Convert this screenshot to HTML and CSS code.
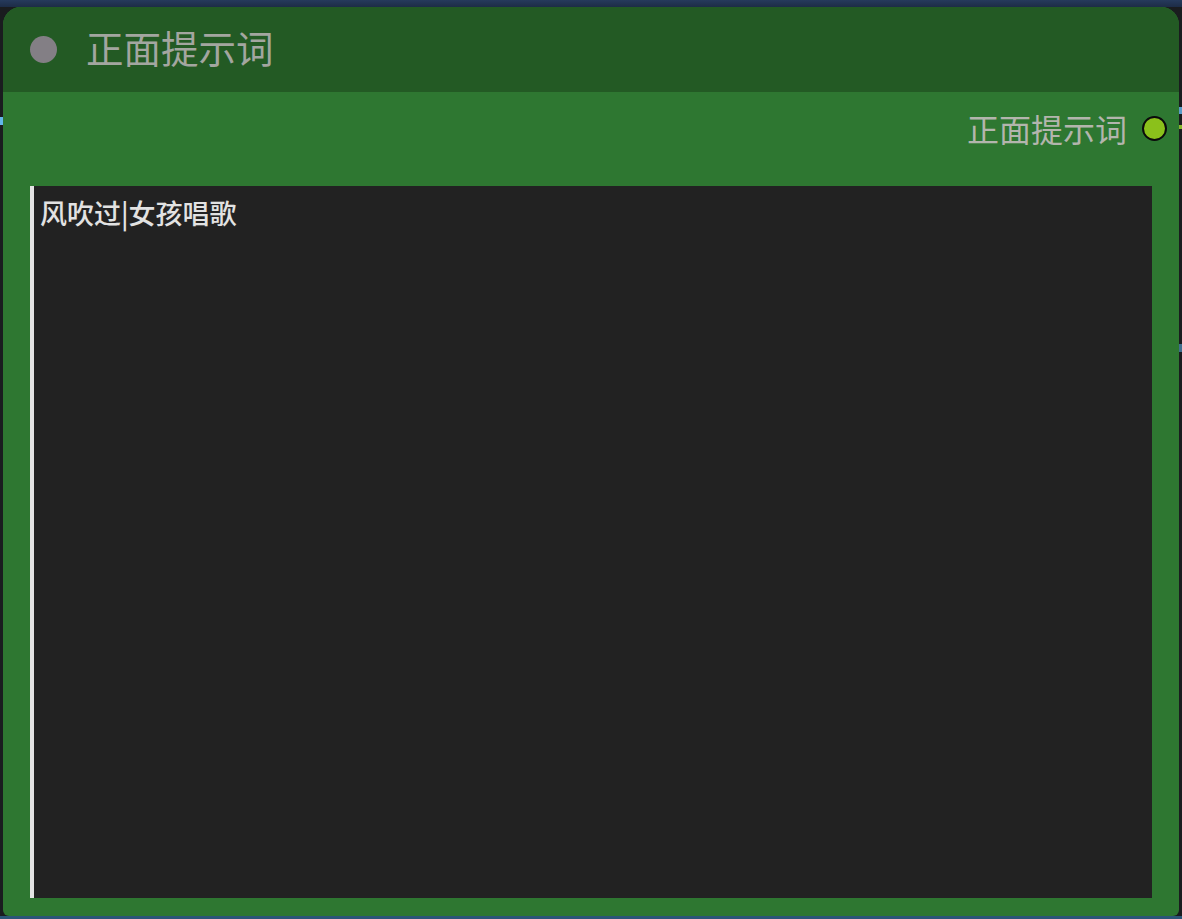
FILE: index.html
```html
<!DOCTYPE html>
<html lang="zh-CN">
<head>
<meta charset="utf-8">
<title>正面提示词</title>
<link rel="stylesheet" href="styles.css">
</head>
<body>
<div class="canvas">
  <div class="canvas-top"></div>
  <span class="link link-left"></span>
  <span class="link link-right-blue"></span>
  <span class="link link-right-green"></span>
  <span class="link link-right-mid"></span>
  <div class="node">
    <div class="node-header">
      <span class="status-dot"></span>
      <span class="node-title">正面提示词</span>
    </div>
    <div class="node-body">
      <div class="output-row">
        <span class="output-label">正面提示词</span>
        <span class="output-dot"></span>
      </div>
      <textarea class="prompt" spellcheck="false">风吹过|女孩唱歌</textarea>
    </div>
  </div>
  <div class="canvas-bottom"></div>
</div>
</body>
</html>
```
FILE: styles.css
```css
* { box-sizing: border-box; }
html, body {
  margin: 0;
  padding: 0;
  width: 1182px;
  height: 919px;
  overflow: hidden;
  background: #1a1c1f;
  font-family: "Noto Sans CJK SC", "Noto Sans", sans-serif;
}
.canvas {
  position: relative;
  width: 1182px;
  height: 919px;
  display: flex;
  flex-direction: column;
}
.canvas-top {
  height: 7px;
  flex: none;
  background: linear-gradient(#263a5c, #1d2c46);
}
.canvas-bottom {
  height: 3px;
  flex: none;
  background: #2b5677;
}
.link {
  position: absolute;
  display: block;
}
.link-left { left: 0; top: 117px; width: 3px; height: 8px; background: #62b6ea; }
.link-right-blue { right: 0; top: 107px; width: 3px; height: 7px; background: #5a9cc8; }
.link-right-green { right: 0; top: 125px; width: 3px; height: 4px; background: #86b82a; }
.link-right-mid { right: 0; top: 344px; width: 3px; height: 8px; background: #3f6f8e; }
.node {
  margin: 0 3px;
  height: 909px;
  flex: none;
  display: flex;
  flex-direction: column;
  background: #2e7731;
  border-radius: 18px 18px 6px 6px;
  overflow: hidden;
}
.node-header {
  height: 85px;
  flex: none;
  background: #235a24;
  display: flex;
  align-items: center;
  padding-left: 27px;
  gap: 29px;
}
.status-dot {
  width: 27px;
  height: 27px;
  border-radius: 50%;
  background: #837f85;
  flex: none;
}
.node-title {
  font-size: 37.5px;
  color: #a3a6a0;
  line-height: 1;
  margin-top: -5px;
}
.node-body {
  flex: 1;
  display: flex;
  flex-direction: column;
  padding: 0 27px 18px 27px;
}
.output-row {
  height: 72px;
  display: flex;
  align-items: center;
  justify-content: flex-end;
  gap: 15px;
  margin-right: -15px;
}
.output-label {
  font-size: 32px;
  line-height: 1;
  color: #b3b5ad;
}
.output-dot {
  width: 25px;
  height: 25px;
  border-radius: 50%;
  background: #8bc11b;
  border: 2.5px solid #0b0b0b;
  flex: none;
}
.prompt {
  margin-top: 22px;
  flex: 1;
  width: 100%;
  display: block;
  resize: none;
  outline: none;
  border: none;
  border-left: 4px solid #e4e4e4;
  background: #222222;
  color: #e2e2e2;
  font-family: "Noto Sans CJK SC", "Noto Sans", sans-serif;
  font-size: 27px;
  font-weight: 500;
  line-height: 1.2;
  padding: 11px 6px;
  overflow: hidden;
}
```
